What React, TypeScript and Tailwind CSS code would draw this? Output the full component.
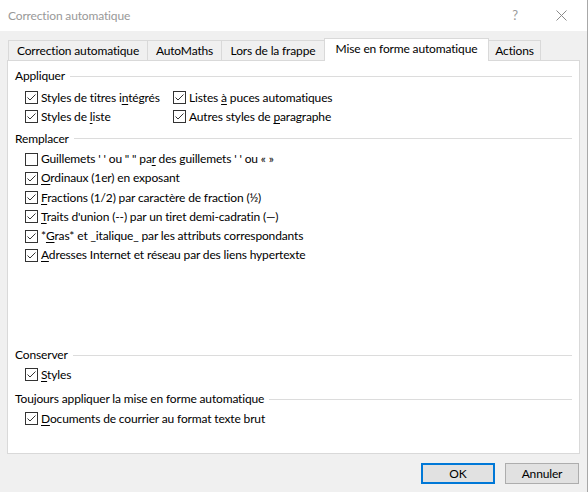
import React from 'react';

const font = "font-['Lato','Noto_Sans',sans-serif]";

const CheckBox: React.FC<{ checked: boolean }> = ({ checked }) => (
  <svg width="13" height="13" viewBox="0 0 13 13" className="shrink-0">
    <rect x="0.5" y="0.5" width="12" height="12" fill="#ffffff" stroke="#333333" />
    {checked && (
      <path d="M2.5 6.5 L5 9 L10.5 3.5" fill="none" stroke="#333333" strokeWidth="1" />
    )}
  </svg>
);

// label is split around the access-key letter: [before, key, after]
const Option: React.FC<{ checked?: boolean; label: [string, string, string]; className?: string }> = ({
  checked = true,
  label,
  className = ''
}) => (
  <div className={`flex items-center h-[19.25px] ${className}`}>
    <CheckBox checked={checked} />
    <span className="ml-[3px] whitespace-nowrap">
      {label[0]}
      <span className="underline underline-offset-2">{label[1]}</span>
      {label[2]}
    </span>
  </div>
);

const GroupHeader: React.FC<{ title: string; className?: string }> = ({ title, className = '' }) => (
  <div className={`flex items-center h-[16px] ${className}`}>
    <span className="whitespace-nowrap">{title}</span>
    <div className="flex-1 h-px bg-[#dcdcdc] ml-[5px]" />
  </div>
);

const tabs = [
  { label: 'Correction automatique', width: 'w-[140px]' },
  { label: 'AutoMaths', width: 'w-[75px]' },
  { label: 'Lors de la frappe', width: 'w-[104px]' },
  { label: 'Mise en forme automatique', width: 'w-[165px]', active: true },
  { label: 'Actions', width: 'w-[53px]' }
];

const App: React.FC = () => {
  const replaceOptions: { checked: boolean; label: [string, string, string] }[] = [
    { checked: false, label: ["Guillemets ' ' ou \" \" pa", 'r', " des guillemets ' ' ou « »"] },
    { checked: true, label: ['', 'O', 'rdinaux (1er) en exposant'] },
    { checked: true, label: ['', 'F', 'ractions (1/2) par caractère de fraction (½)'] },
    { checked: true, label: ['', 'T', "raits d'union (--) par un tiret demi-cadratin (—)"] },
    { checked: true, label: ['*', 'G', 'ras* et _italique_ par les attributs correspondants'] },
    { checked: true, label: ['', 'A', 'dresses Internet et réseau par des liens hypertexte'] }
  ];

  return (
    <div className={`w-[588px] h-[492px] bg-[#f0f0f0] text-[12px] tracking-[-0.15px] text-black flex flex-col border-r border-[#a8a8a8] ${font}`}>
      {/* Title bar */}
      <div className="h-[31px] bg-white flex items-center shrink-0">
        <span className="ml-[8px] text-[#999999]">Correction automatique</span>
        <span className="ml-auto text-[#9a9a9a] text-[13px] mr-[38px]">?</span>
        <svg width="11" height="11" viewBox="0 0 11 11" className="mr-[20px]">
          <path d="M0.5 0.5 L10.5 10.5 M10.5 0.5 L0.5 10.5" stroke="#8a8a8a" strokeWidth="1" />
        </svg>
      </div>

      {/* Tabs */}
      <div className="flex items-end h-[22px] mt-[7px] ml-[8px] relative z-10">
        {tabs.map((tab) =>
          tab.active ? (
            <div
              key={tab.label}
              className={`${tab.width} h-[23px] -mb-px -ml-px bg-white border border-b-0 border-[#d9d9d9] flex items-center justify-center pb-[2px]`}
            >
              {tab.label}
            </div>
          ) : (
            <div
              key={tab.label}
              className={`${tab.width} h-[20px] -ml-px first:ml-0 bg-[#f0f0f0] border border-b-0 border-[#d9d9d9] flex items-center justify-center`}
            >
              {tab.label}
            </div>
          )
        )}
      </div>

      {/* Panel */}
      <div className="ml-[7px] w-[573px] h-[394px] bg-white border border-[#d9d9d9] px-[7px] pt-[7px]">
        <GroupHeader title="Appliquer" />
        <div className="flex mt-[4px] pl-[10px]">
          <div className="flex flex-col w-[148px]">
            <Option label={['Styles de titres i', 'n', 'tégrés']} />
            <Option label={['Styles de ', 'l', 'iste']} />
          </div>
          <div className="flex flex-col">
            <Option label={['Listes ', 'à', ' puces automatiques']} />
            <Option label={['Autres styles de ', 'p', 'aragraphe']} />
          </div>
        </div>

        <GroupHeader title="Remplacer" className="mt-[4px]" />
        <div className="flex flex-col mt-[3px] pl-[10px]">
          {replaceOptions.map((opt, i) => (
            <Option key={i} checked={opt.checked} label={opt.label} />
          ))}
        </div>

        <GroupHeader title="Conserver" className="mt-[82px]" />
        <div className="flex flex-col mt-[2px] pl-[10px]">
          <Option label={['', 'S', 'tyles']} />
        </div>

        <GroupHeader title="Toujours appliquer la mise en forme automatique" className="mt-[7px]" />
        <div className="flex flex-col mt-[2px] pl-[10px]">
          <Option label={['', 'D', 'ocuments de courrier au format texte brut']} />
        </div>
      </div>

      {/* Buttons */}
      <div className="flex justify-end gap-[10px] mt-[9px] pr-[8px]">
        <button className="w-[74px] h-[21px] bg-[#e1e1e1] border-2 border-[#0078d7] flex items-center justify-center">
          OK
        </button>
        <button className="w-[74px] h-[21px] bg-[#e1e1e1] border border-[#adadad] flex items-center justify-center">
          Annuler
        </button>
      </div>
    </div>
  );
};

export default App;
